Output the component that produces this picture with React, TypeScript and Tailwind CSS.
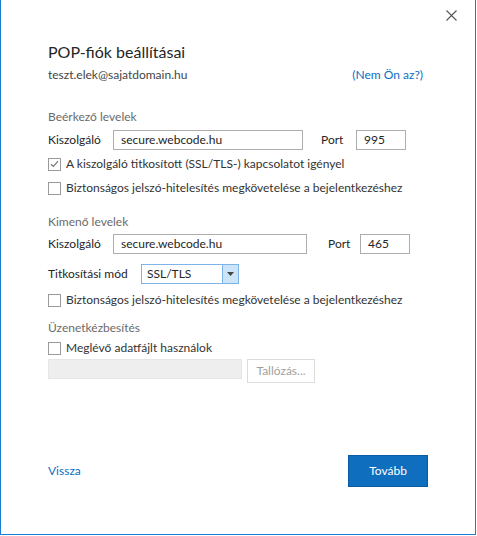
import { FC, ReactNode } from "react";

const font = { fontFamily: 'Lato, "Noto Sans", Arial, sans-serif' };

const Checkbox: FC<{ checked?: boolean; children: ReactNode; className?: string }> = ({
  checked,
  children,
  className = "",
}) => (
  <div className={`flex items-center h-[16px] ${className}`}>
    <span className="w-[13px] h-[13px] border border-[#9a9a9a] bg-white flex items-center justify-center shrink-0">
      {checked && (
        <svg width="9" height="8" viewBox="0 0 9 8">
          <path d="M1 4.2 L3.4 6.5 L8 1.2" fill="none" stroke="#777" strokeWidth="1.2" />
        </svg>
      )}
    </span>
    <span className="ml-[5px] text-[12px] text-[#333] leading-[16px] whitespace-nowrap">{children}</span>
  </div>
);

const TextInput: FC<{ value?: string; className?: string }> = ({ value, className = "" }) => (
  <div
    className={`h-[20px] border border-[#adadad] bg-white flex items-center pl-[7px] text-[12px] text-[#262626] ${className}`}
  >
    {value}
  </div>
);

const SectionLabel: FC<{ children: ReactNode; className?: string }> = ({ children, className = "" }) => (
  <div className={`h-[16px] text-[12px] leading-[16px] text-[#6b6b6b] ${className}`}>{children}</div>
);

export default function App() {
  return (
    <div className="w-[477px] h-[536px] bg-white" style={font}>
      <div className="w-[476px] h-[535px] border-l border-r border-b border-[#1a7fd4] bg-white flex flex-col px-[47px]">
        {/* close */}
        <div className="h-[30px] flex items-center justify-end -mr-[29px]">
          <svg width="11" height="11" viewBox="0 0 11 11">
            <path d="M0.5 0.5 L10.5 10.5 M10.5 0.5 L0.5 10.5" stroke="#555" strokeWidth="1.1" />
          </svg>
        </div>

        <div className="mt-[11px] h-[22px] text-[16px] leading-[22px] text-[#262626]">POP-fiók beállításai</div>

        <div className="mt-[4px] h-[16px] flex justify-between items-center pr-[5px] text-[12px] leading-[16px]">
          <span className="text-[#444]">teszt.elek@sajatdomain.hu</span>
          <span className="text-[#0a6ec4]">(Nem Ön az?)</span>
        </div>

        <SectionLabel className="mt-[26px]">Beérkező levelek</SectionLabel>

        <div className="mt-[5px] h-[20px] flex items-center text-[12px] text-[#262626]">
          <span className="w-[65px]">Kiszolgáló</span>
          <TextInput value="secure.webcode.hu" className="w-[190px]" />
          <span className="ml-[18px] w-[35px]">Port</span>
          <TextInput value="995" className="w-[50px]" />
        </div>

        <Checkbox checked className="mt-[6px]">
          A kiszolgáló titkosított (SSL/TLS-) kapcsolatot igényel
        </Checkbox>
        <Checkbox className="mt-[8px]">Biztonságos jelszó-hitelesítés megkövetelése a bejelentkezéshez</Checkbox>

        <SectionLabel className="mt-[18px]">Kimenő levelek</SectionLabel>

        <div className="mt-[4px] h-[20px] flex items-center text-[12px] text-[#262626]">
          <span className="w-[65px]">Kiszolgáló</span>
          <TextInput value="secure.webcode.hu" className="w-[194px]" />
          <span className="ml-[21px] w-[32px]">Port</span>
          <TextInput value="465" className="w-[50px]" />
        </div>

        <div className="mt-[10px] h-[20px] flex items-center text-[12px] text-[#262626]">
          <span className="w-[93px]">Titkosítási mód</span>
          <div className="w-[98px] h-[20px] border border-[#7eb4ea] flex">
            <span className="flex-1 flex items-center pl-[5px] bg-white">SSL/TLS</span>
            <span className="w-[16px] border-l border-[#7eb4ea] bg-[#cce4f7] flex items-center justify-center">
              <svg width="7" height="4" viewBox="0 0 7 4">
                <path d="M0 0 H7 L3.5 4 Z" fill="#444" />
              </svg>
            </span>
          </div>
        </div>

        <Checkbox className="mt-[8px]">Biztonságos jelszó-hitelesítés megkövetelése a bejelentkezéshez</Checkbox>

        <SectionLabel className="mt-[12px]">Üzenetkézbesítés</SectionLabel>

        <Checkbox className="mt-[4px]">Meglévő adatfájlt használok</Checkbox>

        <div className="mt-[3px] h-[24px] flex items-start">
          <div className="w-[194px] h-[20px] bg-[#eeeeee] border border-[#e6e6e6]" />
          <div className="ml-[5px] w-[68px] h-[24px] border border-[#dcdcdc] bg-white flex items-center justify-center text-[12px] text-[#a0a0a0]">
            Tallózás...
          </div>
        </div>

        <div className="mt-[72px] h-[32px] flex items-center justify-between">
          <span className="text-[12px] text-[#0a6ec4]">Vissza</span>
          <button className="w-[80px] h-[32px] bg-[#106ebe] border border-[#0b5ca3] text-white text-[12px]">
            Tovább
          </button>
        </div>
      </div>
    </div>
  );
}
